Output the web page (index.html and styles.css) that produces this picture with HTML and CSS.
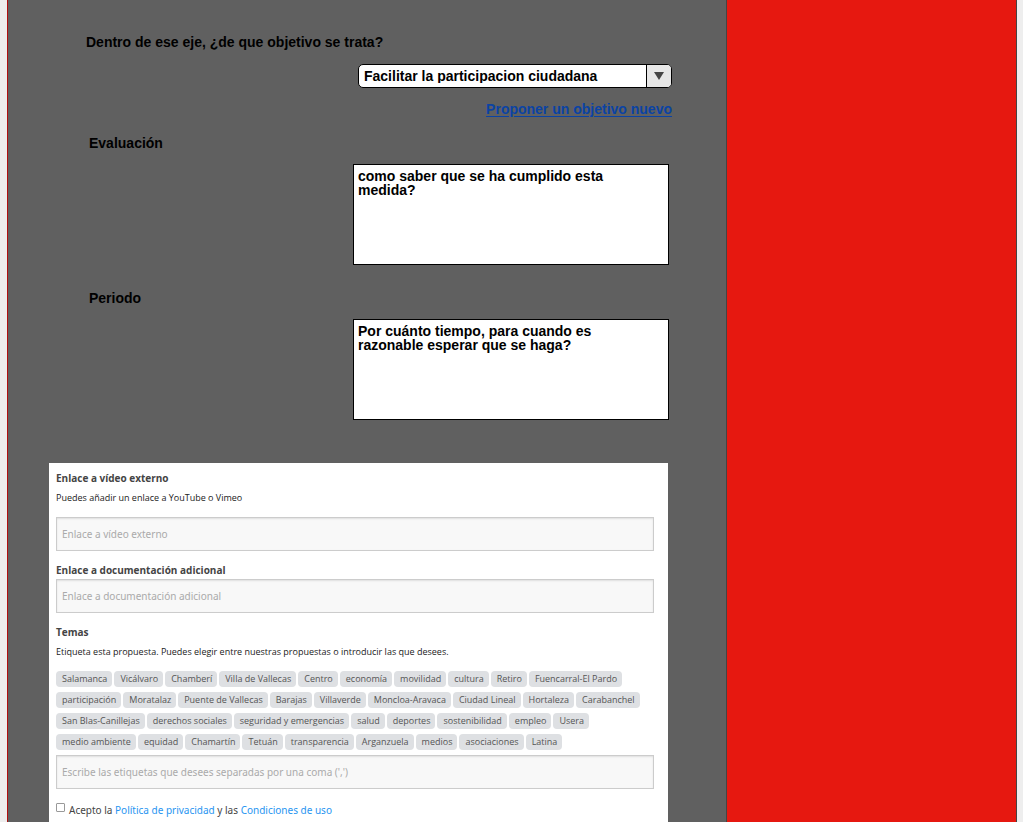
FILE: index.html
```html
<!DOCTYPE html>
<html lang="es">
<head>
<meta charset="utf-8">
<meta name="viewport" content="width=device-width, initial-scale=1">
<title>Nueva propuesta</title>
<link rel="stylesheet" href="styles.css">
</head>
<body>
<div class="page">
  <main class="content">
    <form class="form">
      <section class="goal">
        <label class="heading" for="objetivo">Dentro de ese eje, ¿de que objetivo se trata?</label>
        <div class="goal-controls">
          <div class="combo">
            <select class="combo-select" id="objetivo">
              <option>Facilitar la participacion ciudadana</option>
            </select>
            <span class="combo-arrow"><svg width="10" height="8" viewBox="0 0 10 8" aria-hidden="true"><path d="M0 0h10L5 8z" fill="#444"/></svg></span>
          </div>
          <a class="new-goal" href="#">Proponer un objetivo nuevo</a>
        </div>
      </section>
      <section class="question">
        <label class="heading" for="evaluacion">Evaluación</label>
        <textarea class="answer" id="evaluacion">como saber que se ha cumplido esta medida?</textarea>
      </section>
      <section class="question">
        <label class="heading" for="periodo">Periodo</label>
        <textarea class="answer" id="periodo">Por cuánto tiempo, para cuando es razonable esperar que se haga?</textarea>
      </section>
      <section class="panel">
        <div class="field">
          <label class="label" for="video">Enlace a vídeo externo</label>
          <p class="hint">Puedes añadir un enlace a YouTube o Vimeo</p>
          <input class="input" id="video" type="text" placeholder="Enlace a vídeo externo">
        </div>
        <div class="field">
          <label class="label" for="documentacion">Enlace a documentación adicional</label>
          <input class="input" id="documentacion" type="text" placeholder="Enlace a documentación adicional">
        </div>
        <div class="field">
          <label class="label" for="temas">Temas</label>
          <p class="hint">Etiqueta esta propuesta. Puedes elegir entre nuestras propuestas o introducir las que desees.</p>
          <div class="tags">
            <button class="tag" type="button">Salamanca</button>
            <button class="tag" type="button">Vicálvaro</button>
            <button class="tag" type="button">Chamberí</button>
            <button class="tag" type="button">Villa de Vallecas</button>
            <button class="tag" type="button">Centro</button>
            <button class="tag" type="button">economía</button>
            <button class="tag" type="button">movilidad</button>
            <button class="tag" type="button">cultura</button>
            <button class="tag" type="button">Retiro</button>
            <button class="tag" type="button">Fuencarral-El Pardo</button>
            <button class="tag" type="button">participación</button>
            <button class="tag" type="button">Moratalaz</button>
            <button class="tag" type="button">Puente de Vallecas</button>
            <button class="tag" type="button">Barajas</button>
            <button class="tag" type="button">Villaverde</button>
            <button class="tag" type="button">Moncloa-Aravaca</button>
            <button class="tag" type="button">Ciudad Lineal</button>
            <button class="tag" type="button">Hortaleza</button>
            <button class="tag" type="button">Carabanchel</button>
            <button class="tag" type="button">San Blas-Canillejas</button>
            <button class="tag" type="button">derechos sociales</button>
            <button class="tag" type="button">seguridad y emergencias</button>
            <button class="tag" type="button">salud</button>
            <button class="tag" type="button">deportes</button>
            <button class="tag" type="button">sostenibilidad</button>
            <button class="tag" type="button">empleo</button>
            <button class="tag" type="button">Usera</button>
            <button class="tag" type="button">medio ambiente</button>
            <button class="tag" type="button">equidad</button>
            <button class="tag" type="button">Chamartín</button>
            <button class="tag" type="button">Tetuán</button>
            <button class="tag" type="button">transparencia</button>
            <button class="tag" type="button">Arganzuela</button>
            <button class="tag" type="button">medios</button>
            <button class="tag" type="button">asociaciones</button>
            <button class="tag" type="button">Latina</button>
          </div>
          <input class="input" id="temas" type="text" placeholder="Escribe las etiquetas que desees separadas por una coma (',')">
        </div>
        <div class="terms">
          <input class="terms-box" id="acepto" type="checkbox">
          <label for="acepto">Acepto la <a class="terms-link" href="#">Política de privacidad</a> y las <a class="terms-link" href="#">Condiciones de uso</a></label>
        </div>
      </section>
    </form>
  </main>
  <aside class="side"></aside>
</div>
</body>
</html>
```
FILE: styles.css
```css
* {
  box-sizing: border-box;
}

body {
  margin: 0;
  background: #eee;
  color: #000;
  font: bold 14px/14px "Liberation Sans", Arial, sans-serif;
}

.page {
  display: grid;
  grid-template-columns: 719fr 289fr;
  min-height: 100vh;
  margin: 0 6px 0 7px;
  border-right: 1px solid #444;
  border-left: 1px solid #b01010;
  background: #e61810;
}

.content {
  border-right: 1px solid #444;
  background: #606060;
}

.form {
  display: flex;
  flex-direction: column;
  min-height: 100vh;
  padding: 35px 57px 0 41px;
}

.heading {
  display: block;
}

.goal {
  padding-left: 37px;
}

.goal-controls {
  display: flex;
  flex-direction: column;
  align-items: flex-end;
  gap: 14px;
  margin: 15px -3px 0 0;
}

.combo {
  position: relative;
  width: 100%;
  max-width: 314px;
}

.combo-select {
  display: block;
  width: 100%;
  height: 24px;
  padding: 0 30px 0 5px;
  border: 1px solid #000;
  border-radius: 5px;
  appearance: none;
  background: #fff;
  color: #000;
  font: inherit;
}

.combo-arrow {
  position: absolute;
  top: 1px;
  right: 1px;
  bottom: 1px;
  display: flex;
  align-items: center;
  justify-content: center;
  width: 25px;
  border-left: 1px solid #000;
  border-radius: 0 4px 4px 0;
  background: #e6e6e6;
  pointer-events: none;
}

.new-goal {
  color: #0b43a4;
  text-decoration: underline;
  text-underline-offset: 2px;
}

.question {
  display: flex;
  flex-direction: column;
  gap: 14px;
  margin-top: 20px;
  padding-left: 40px;
}

.question + .question {
  margin-top: 26px;
}

.answer {
  display: block;
  align-self: flex-end;
  width: 100%;
  max-width: 316px;
  height: 101px;
  padding: 4px 16px 4px 4px;
  border: 1px solid #000;
  background: #fff;
  color: #000;
  font: inherit;
  resize: none;
}

.panel {
  display: flex;
  flex: 1;
  flex-direction: column;
  gap: 12px;
  margin: 43px 1px 0 0;
  padding: 8px 14px 4px 7px;
  background: #fff;
  color: #444;
  font: 10px/14px "Noto Sans", "Open Sans", sans-serif;
}

.label {
  display: block;
  font-family: "Open Sans", sans-serif;
  font-weight: bold;
}

.hint {
  margin: 6px 0 12px;
  color: #222;
  font-family: "Open Sans", sans-serif;
  font-size: 9px;
}

.input {
  display: block;
  width: 100%;
  height: 34px;
  margin-top: 2px;
  padding: 0 5px;
  border: 1px solid #ccc;
  background: #f8f8f8;
  box-shadow: inset 0 1px 2px rgba(0, 0, 0, 0.1);
  color: #444;
  font: inherit;
}

.input::placeholder {
  color: #aaa;
}

.tags {
  display: flex;
  flex-wrap: wrap;
  gap: 5px 2px;
  margin-bottom: 5px;
}

.tag {
  height: 16px;
  padding: 0 5px 0 6px;
  border: 0;
  border-radius: 4px;
  background: #dee0e3;
  color: #555;
  font: 9px/14px "Open Sans", sans-serif;
}

.terms {
  display: flex;
  align-items: flex-start;
  gap: 4px;
  padding-top: 2px;
}

.terms-box {
  width: 9px;
  height: 9px;
  margin: 0;
  border: 1px solid #999;
  border-radius: 1px;
  appearance: none;
  background: #fff;
}

.terms-box:checked {
  background: #2895f1;
}

.terms-link {
  color: #2895f1;
  text-decoration: none;
}
```
